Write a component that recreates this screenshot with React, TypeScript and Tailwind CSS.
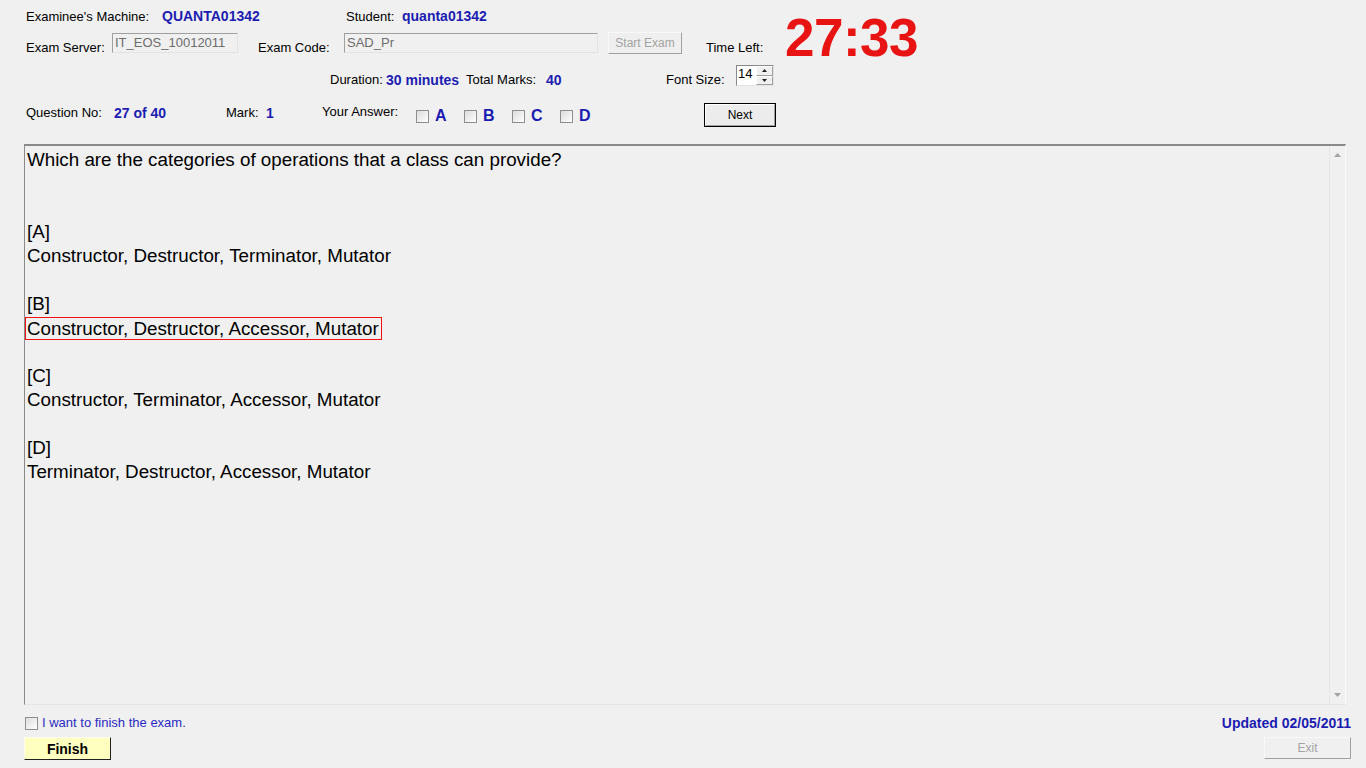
import React from "react";

const BLUE = "text-[#1c1cb0]";

function Check() {
  return (
    <span className="block w-[13px] h-[13px] shrink-0 border border-[#8e8f8f] bg-gradient-to-br from-[#dcdcdc] to-white" />
  );
}

function AnswerBox({ letter, w }: { letter: string; w: string }) {
  return (
    <div className={`flex items-start shrink-0 ${w}`}>
      <div className="mt-[22px]">
        <Check />
      </div>
      <span className={`ml-[6px] mt-[19px] text-[16px] leading-[18px] font-bold ${BLUE}`}>{letter}</span>
    </div>
  );
}

export default function App() {
  return (
    <div className="w-[1366px] h-[768px] bg-[#f0f0f0] flex flex-col overflow-hidden font-['Liberation_Sans',Arial,sans-serif] text-[13px] leading-[16px] text-black">
      {/* header top block */}
      <div className="flex h-[60px] shrink-0">
        <div className="w-[785px] shrink-0 flex flex-col">
          <div className="h-[32px] flex items-baseline pt-[8px] pl-[26px]">
            <span className="w-[136px] shrink-0">Examinee's Machine:</span>
            <span className={`w-[184px] shrink-0 font-bold text-[14px] ${BLUE}`}>QUANTA01342</span>
            <span className="w-[56px] shrink-0">Student:</span>
            <span className={`font-bold text-[14px] ${BLUE}`}>quanta01342</span>
          </div>
          <div className="h-[28px] flex items-start pl-[26px]">
            <span className="w-[86px] shrink-0 mt-[8px]">Exam Server:</span>
            <div className="w-[126px] h-[20px] mt-[1px] shrink-0 border border-t-[#a0a0a0] border-l-[#a0a0a0] border-b-[#e3e3e3] border-r-[#e3e3e3] bg-[#f0f0f0] px-[2px] text-[#6d6d6d] leading-[16px] pt-[1px]">
              IT_EOS_10012011
            </div>
            <span className="w-[86px] shrink-0 ml-[20px] mt-[8px]">Exam Code:</span>
            <div className="w-[254px] h-[20px] mt-[1px] shrink-0 border border-t-[#a0a0a0] border-l-[#a0a0a0] border-b-[#e3e3e3] border-r-[#e3e3e3] bg-[#f0f0f0] px-[2px] text-[#6d6d6d] leading-[16px] pt-[1px]">
              SAD_Pr
            </div>
            <div className="w-[74px] h-[22px] ml-[10px] shrink-0 border border-t-[#f8f8f8] border-l-[#f8f8f8] border-b-[#a0a0a0] border-r-[#a0a0a0] bg-[#efefef] text-[#a3a3a3] text-[12px] flex items-center justify-center">
              Start Exam
            </div>
            <span className="ml-[24px] mt-[8px]">Time Left:</span>
          </div>
        </div>
        <div className="pt-[11px]">
          <span className="block text-[53px] leading-[53px] font-bold text-[#e81414] tracking-[-0.5px]">27:33</span>
        </div>
      </div>

      {/* row 3 */}
      <div className="h-[28px] shrink-0 flex items-start pl-[330px]">
        <span className="w-[56px] shrink-0 mt-[12px]">Duration:</span>
        <span className={`w-[80px] shrink-0 mt-[12px] font-bold text-[14px] ${BLUE}`}>30 minutes</span>
        <span className="w-[80px] shrink-0 mt-[12px]">Total Marks:</span>
        <span className={`w-[120px] shrink-0 mt-[12px] font-bold text-[14px] ${BLUE}`}>40</span>
        <span className="w-[70px] shrink-0 mt-[12px]">Font Size:</span>
        <div className="w-[38px] h-[21px] mt-[5px] shrink-0 flex border border-t-[#8a8a8a] border-l-[#8a8a8a] border-b-[#e3e3e3] border-r-[#e3e3e3] bg-white">
          <span className="flex-1 pl-[1px] leading-[16px]">14</span>
          <div className="w-[17px] flex flex-col bg-[#f0f0f0]">
            <div className="flex-1 flex items-center justify-center border border-t-white border-l-white border-b-[#a0a0a0] border-r-[#a0a0a0]">
              <svg width="5" height="3" viewBox="0 0 5 3"><path d="M2.5 0 L5 3 L0 3 Z" fill="#222" /></svg>
            </div>
            <div className="flex-1 flex items-center justify-center border border-t-white border-l-white border-b-[#a0a0a0] border-r-[#a0a0a0]">
              <svg width="5" height="3" viewBox="0 0 5 3"><path d="M0 0 L5 0 L2.5 3 Z" fill="#222" /></svg>
            </div>
          </div>
        </div>
      </div>

      {/* row 4 */}
      <div className="h-[56px] shrink-0 flex items-start pl-[26px]">
        <span className="w-[88px] shrink-0 mt-[17px]">Question No:</span>
        <span className={`w-[112px] shrink-0 mt-[17px] font-bold text-[14px] ${BLUE}`}>27 of 40</span>
        <span className="w-[40px] shrink-0 mt-[17px]">Mark:</span>
        <span className={`w-[56px] shrink-0 mt-[17px] font-bold text-[14px] ${BLUE}`}>1</span>
        <span className="w-[94px] shrink-0 mt-[16px]">Your Answer:</span>
        <AnswerBox letter="A" w="w-[48px]" />
        <AnswerBox letter="B" w="w-[48px]" />
        <AnswerBox letter="C" w="w-[48px]" />
        <AnswerBox letter="D" w="w-[144px]" />
        <div className="w-[72px] h-[24px] mt-[15px] shrink-0 border border-black bg-[#ececec] flex">
          <div className="flex-1 border border-t-white border-l-white border-b-[#a0a0a0] border-r-[#a0a0a0] flex items-center justify-center text-[12px]">
            Next
          </div>
        </div>
      </div>

      {/* content box */}
      <div className="ml-[24px] w-[1322px] h-[561px] shrink-0 flex border-l border-t-2 border-b border-r border-t-[#8a8a8a] border-l-[#8a8a8a] border-b-[#e3e3e3] border-r-[#f8f8f8]">
        <div className="flex-1 pl-[2px] pt-[2px] text-[18.8px] leading-[24px]">
          <div>Which are the categories of operations that a class can provide?</div>
          <div className="h-[24px]" />
          <div className="h-[24px]" />
          <div>[A]</div>
          <div>Constructor, Destructor, Terminator, Mutator</div>
          <div className="h-[24px]" />
          <div>[B]</div>
          <div className="h-[24px] flex items-center">
            <div className="ml-[-2px] bg-[#f01010] p-[1px]">
              <div className="bg-[#f0f0f0] pl-[1px] pr-[2px] leading-[21px]">
                Constructor, Destructor, Accessor, Mutator
              </div>
            </div>
          </div>
          <div className="h-[24px]" />
          <div>[C]</div>
          <div>Constructor, Terminator, Accessor, Mutator</div>
          <div className="h-[24px]" />
          <div>[D]</div>
          <div>Terminator, Destructor, Accessor, Mutator</div>
        </div>
        <div className="w-[16px] shrink-0 flex flex-col justify-between items-center border-l border-[#e6e6e6] py-[7px]">
          <svg width="7" height="4" viewBox="0 0 7 4"><path d="M3.5 0 L7 4 L0 4 Z" fill="#a3a3a3" /></svg>
          <svg width="7" height="4" viewBox="0 0 7 4"><path d="M0 0 L7 0 L3.5 4 Z" fill="#a3a3a3" /></svg>
        </div>
      </div>

      {/* bottom */}
      <div className="flex-1 flex flex-col pt-[10px]">
        <div className="h-[16px] flex items-center pl-[25px] pr-[15px]">
          <Check />
          <span className="ml-[4px] text-[#2b2bc4]">I want to finish the exam.</span>
          <span className={`ml-auto font-bold text-[14px] ${BLUE}`}>Updated 02/05/2011</span>
        </div>
        <div className="mt-[6px] flex items-start pl-[24px] pr-[15px]">
          <div className="w-[87px] h-[23px] flex items-center justify-center bg-[#ffffc0] border border-t-[#fffff0] border-l-[#fffff0] border-b-[#202020] border-r-[#202020] font-bold text-[14px]">
            Finish
          </div>
          <div className="ml-auto w-[87px] h-[22px] flex items-center justify-center border border-t-[#f8f8f8] border-l-[#f8f8f8] border-b-[#a0a0a0] border-r-[#a0a0a0] text-[#a3a3a3] text-[12px]">
            Exit
          </div>
        </div>
      </div>
    </div>
  );
}
